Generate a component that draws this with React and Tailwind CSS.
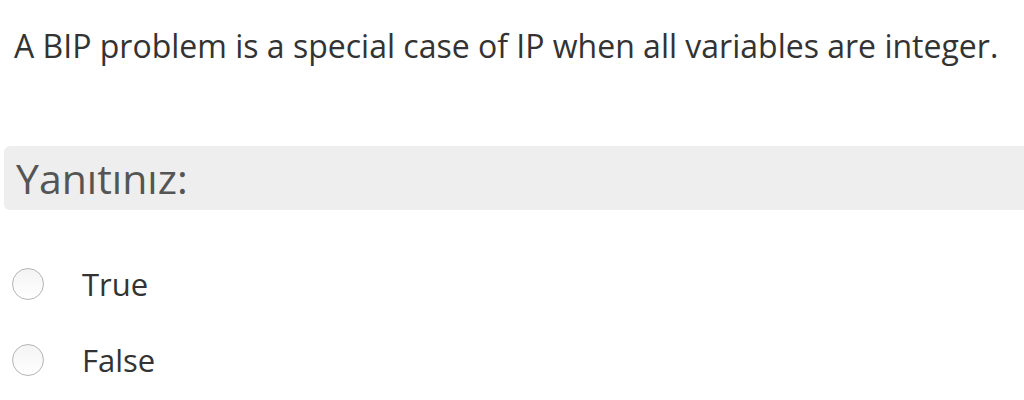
export default function App() {
  const options = ["True", "False"];
  return (
    <div
      className="w-[1024px] h-[400px] bg-white text-[#333] overflow-hidden"
      style={{ fontFamily: '"Open Sans", sans-serif' }}
    >
      <div className="pl-[14px] pt-[22px] text-[32px] leading-[48px]">
        A BIP problem is a special case of IP when all variables are integer.
      </div>
      <div className="mt-[76px] ml-[4px] h-[64px] bg-[#eeeeee] rounded-l-[6px] pl-[12px] flex items-center text-[41px] text-[#555] leading-none">
        Yanıtınız:
      </div>
      <div className="mt-[58px] flex flex-col gap-[44px]">
        {options.map((o) => (
          <label key={o} className="flex items-center h-[32px]">
            <span className="ml-[12px] w-[32px] h-[32px] rounded-full border border-[#b5b5b5] bg-gradient-to-b from-[#f4f4f4] to-white" />
            <span className="ml-[38px] text-[31px] leading-none">{o}</span>
          </label>
        ))}
      </div>
    </div>
  );
}
